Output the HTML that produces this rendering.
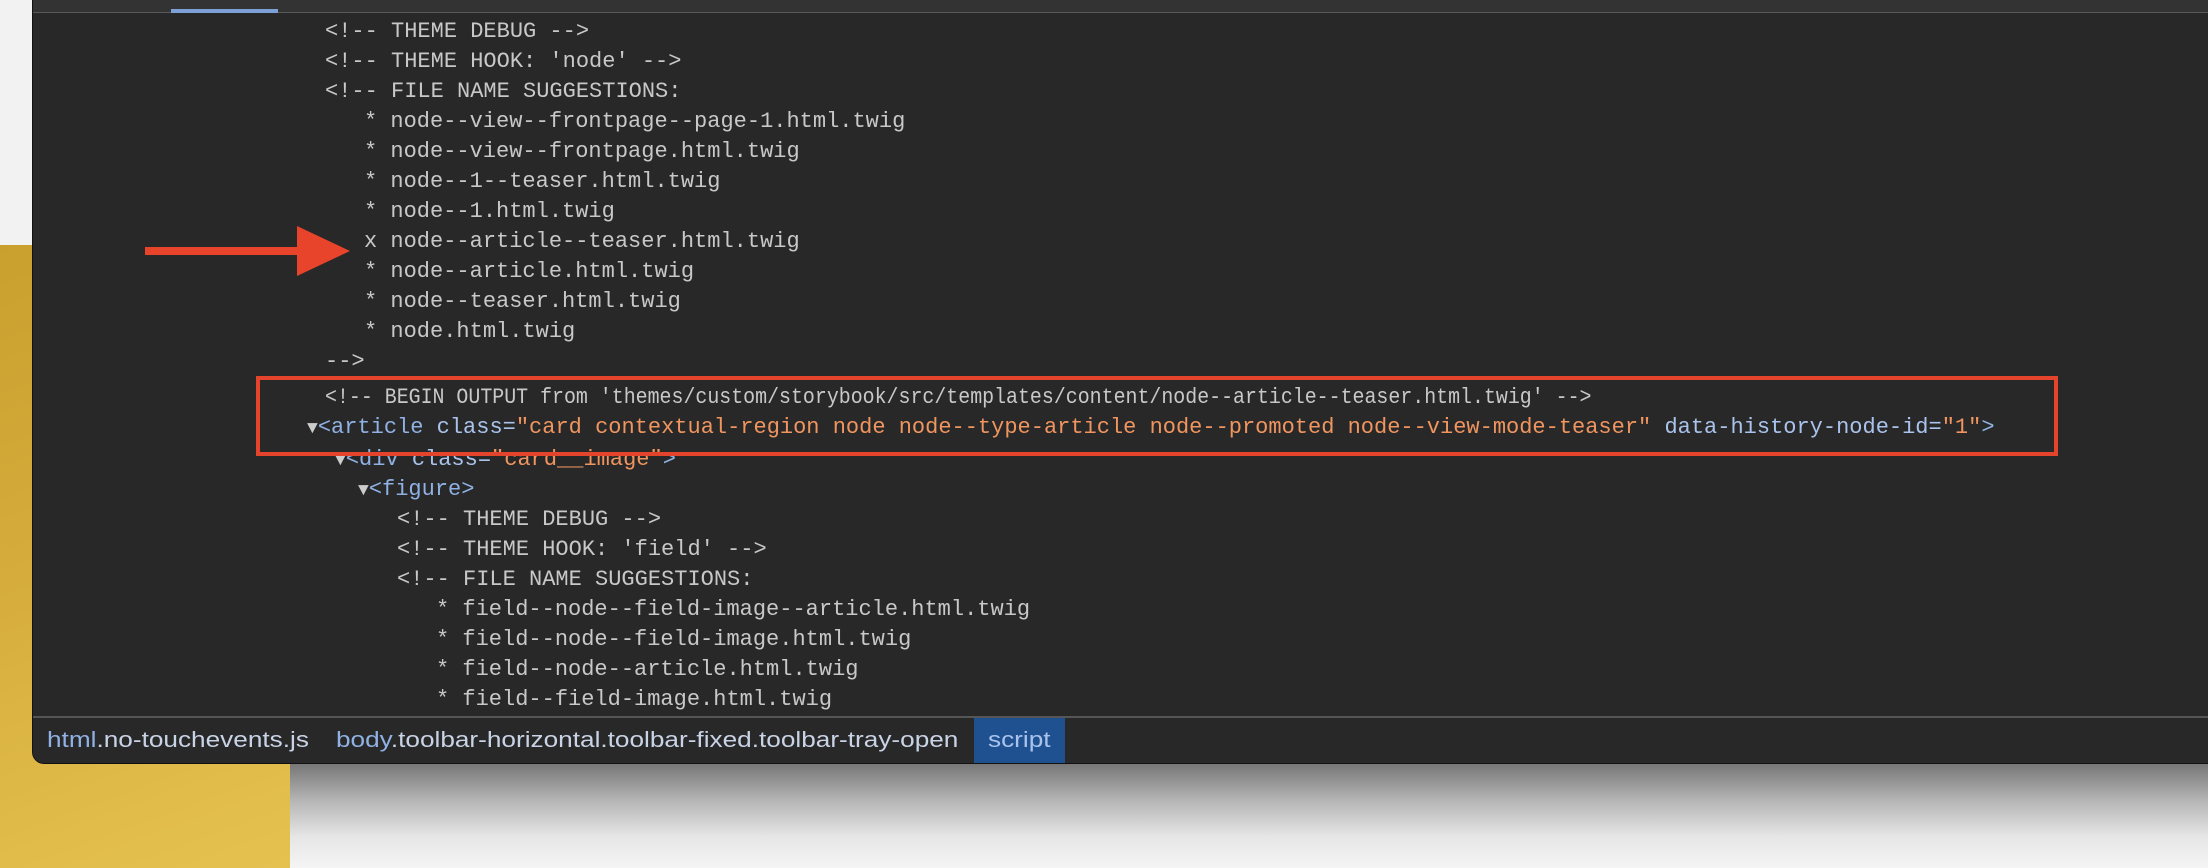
<!DOCTYPE html>
<html><head><meta charset="utf-8"><style>
*{margin:0;padding:0;box-sizing:border-box}
body{width:2208px;height:868px;overflow:hidden;position:relative;background:#f2f2f2;font-family:"Liberation Mono",monospace}
#yellow{position:absolute;left:0;top:245px;width:290px;height:623px;background:linear-gradient(160deg,#c9a02e 0%,#d4aa3a 40%,#e5c250 100%)}
#below{position:absolute;left:290px;top:764px;right:0;bottom:0;background:linear-gradient(#777 0%,#b5b5b5 35%,#e6e6e6 70%,#f5f5f5 100%)}
#panel{position:absolute;left:32px;top:0;right:0;height:764px;background:#282828;border-bottom-left-radius:12px;border-left:1px solid #111;border-bottom:1px solid #111;overflow:hidden}
#tabbar{position:absolute;left:0;top:0;right:0;height:13px;background:#333;border-bottom:1px solid #5a5a5a}
#tab{position:absolute;left:138px;top:9px;width:107px;height:4px;background:#7da0d8}
.l{position:absolute;white-space:pre;font-size:22px;line-height:30px;color:#c8c8c8}
.t{color:#8fb1e3}.a{color:#a9c3ec}.v{color:#f0955f}
.tri{font-size:18px;color:#ccc}
#box{position:absolute;left:223px;top:376px;width:1802px;height:80px;border:4px solid #e4432c}
#crumb{position:absolute;left:0;top:716px;right:0;height:48px;border-top:2px solid #555;background:#282828;font-family:"Liberation Sans",sans-serif;font-size:22px;color:#c9d3e6}
#crumb span{position:absolute;top:9px;white-space:nowrap;transform:scaleX(1.19);transform-origin:0 0}
#crumb b{font-weight:normal;color:#8fb1e3}
#sel{position:absolute;left:941px;top:0;width:91px;height:48px;background:#1f5190}
</style></head><body>
<div id="yellow"></div><div id="below"></div>
<div id="panel">
<div id="tabbar"></div><div id="tab"></div>
<div class="l" style="left:292px;top:17px">&lt;!-- THEME DEBUG --&gt;</div>
<div class="l" style="left:292px;top:47px">&lt;!-- THEME HOOK: 'node' --&gt;</div>
<div class="l" style="left:292px;top:77px">&lt;!-- FILE NAME SUGGESTIONS:</div>
<div class="l" style="left:331px;top:107px">* node--view--frontpage--page-1.html.twig</div>
<div class="l" style="left:331px;top:137px">* node--view--frontpage.html.twig</div>
<div class="l" style="left:331px;top:167px">* node--1--teaser.html.twig</div>
<div class="l" style="left:331px;top:197px">* node--1.html.twig</div>
<div class="l" style="left:331px;top:227px">x node--article--teaser.html.twig</div>
<div class="l" style="left:331px;top:257px">* node--article.html.twig</div>
<div class="l" style="left:331px;top:287px">* node--teaser.html.twig</div>
<div class="l" style="left:331px;top:317px">* node.html.twig</div>
<div class="l" style="left:292px;top:347px">--&gt;</div>
<div class="l" style="left:292px;top:383px;transform:scaleX(0.905);transform-origin:0 0">&lt;!-- BEGIN OUTPUT from 'themes/custom/storybook/src/templates/content/node--article--teaser.html.twig' --&gt;</div>
<div class="l" style="left:274px;top:413px"><span class="tri">▼</span><span class="t">&lt;article</span> <span class="a">class=</span><span class="v">"card contextual-region node node--type-article node--promoted node--view-mode-teaser"</span> <span class="a">data-history-node-id=</span><span class="v">"1"</span><span class="t">&gt;</span></div>
<div class="l" style="left:302px;top:445px"><span class="tri">▼</span><span class="t">&lt;div</span> <span class="a">class=</span><span class="v">"card__image"</span><span class="t">&gt;</span></div>
<div class="l" style="left:325px;top:475px"><span class="tri">▼</span><span class="t">&lt;figure&gt;</span></div>
<div class="l" style="left:364px;top:505px">&lt;!-- THEME DEBUG --&gt;</div>
<div class="l" style="left:364px;top:535px">&lt;!-- THEME HOOK: 'field' --&gt;</div>
<div class="l" style="left:364px;top:565px">&lt;!-- FILE NAME SUGGESTIONS:</div>
<div class="l" style="left:403px;top:595px">* field--node--field-image--article.html.twig</div>
<div class="l" style="left:403px;top:625px">* field--node--field-image.html.twig</div>
<div class="l" style="left:403px;top:655px">* field--node--article.html.twig</div>
<div class="l" style="left:403px;top:685px">* field--field-image.html.twig</div>
<div id="box"></div>
<div id="crumb"><div id="sel"></div>
<span style="left:14px"><b>html</b>.no-touchevents.js</span>
<span style="left:303px"><b>body</b>.toolbar-horizontal.toolbar-fixed.toolbar-tray-open</span>
<span style="left:955px;color:#a9c3ec">script</span>
</div>
</div>
<svg width="240" height="52" style="position:absolute;left:145px;top:226px" viewBox="0 0 240 52"><rect x="0" y="21" width="160" height="8" fill="#e8432b"/><polygon points="152,0 205,25 152,50" fill="#e8432b"/></svg>
</body></html>
